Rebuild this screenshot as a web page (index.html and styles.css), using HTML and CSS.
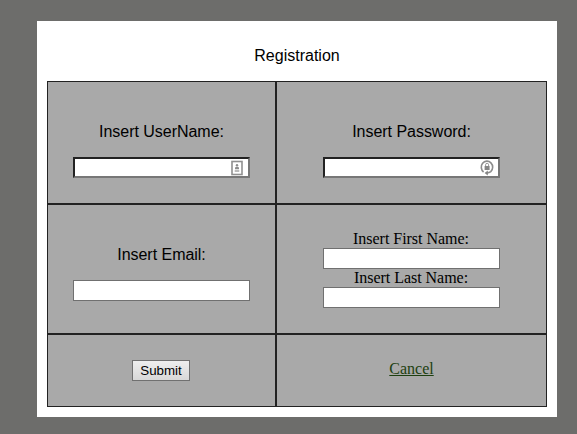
FILE: index.html
```html
<!DOCTYPE html>
<html lang="en">
<head>
<meta charset="utf-8">
<title>Registration</title>
<link rel="stylesheet" href="styles.css">
</head>
<body>
<main class="panel">
  <h1 class="title">Registration</h1>
  <form class="grid">
    <div class="cell user">
      <label class="label" for="user">Insert UserName:</label>
      <div class="field">
        <input class="input inset" id="user" type="text">
        <svg class="icon" width="12" height="16" viewBox="0 0 12 16">
          <rect x="1" y="1.5" width="10" height="13" fill="#fff" stroke="#909090" stroke-width="1.6"/>
          <circle cx="6" cy="5.3" r="1.2" fill="#8c8c8c"/>
          <path d="M4 9.3V8Q4 6.8 6 6.8T8 8V9.3Z" fill="#8c8c8c"/>
          <path d="M3.7 11H8.3" stroke="#aaa" stroke-width="1.6"/>
        </svg>
      </div>
    </div>
    <div class="cell user">
      <label class="label" for="pass">Insert Password:</label>
      <div class="field">
        <input class="input inset" id="pass" type="password">
        <svg class="icon lock" width="14" height="17" viewBox="0 0 14 17">
          <path d="M3.6 13A5.7 6 0 1 1 10.8 12.6Q9.3 13.9 7 13.9" fill="none" stroke="#8c8c8c" stroke-width="1.6"/>
          <path d="M4.6 14L7.8 11.6V16.6Z" fill="#858585"/>
          <rect x="4.6" y="7" width="5" height="4" fill="#858585"/>
          <path d="M5.6 7V5.8A1.5 1.5 0 0 1 8.6 5.8V7" fill="none" stroke="#999"/>
        </svg>
      </div>
    </div>
    <div class="cell email">
      <label class="label" for="email">Insert Email:</label>
      <div class="field"><input class="input" id="email" type="text"></div>
    </div>
    <div class="cell names">
      <label class="name" for="first">Insert First Name:</label>
      <input class="input" id="first" type="text">
      <label class="name" for="last">Insert Last Name:</label>
      <input class="input" id="last" type="text">
    </div>
    <div class="cell actions"><button class="submit" type="button">Submit</button></div>
    <div class="cell actions"><a class="cancel" href="#">Cancel</a></div>
  </form>
</main>
</body>
</html>
```
FILE: styles.css
```css
* { box-sizing: border-box; }
body {
  margin: 0;
  padding: 21px 0 0 37px;
  height: 434px;
  overflow: hidden;
  background: #6d6d6b;
  color: #000;
  font: 16px/18px "Liberation Serif", serif;
}
.panel {
  width: 520px;
  height: 396px;
  padding: 26px 10px 10px;
  background: #fff;
}
.title {
  margin: 0 0 16px;
  text-align: center;
  font: 16px/18px "Liberation Sans", sans-serif;
}
.grid {
  display: grid;
  grid-template-columns: 229px 271px;
  grid-template-rows: 123px 130px 73px;
}
.cell {
  display: flex;
  flex-direction: column;
  align-items: center;
  border: 1px solid #222;
  background: #a9a9a9;
}
.user,
.email { padding-top: 41px; }
.names,
.actions { padding-top: 25px; }
.label {
  margin-bottom: 16px;
  font: 16px/18px "Liberation Sans", sans-serif;
  letter-spacing: -0.03px;
}
.field {
  position: relative;
  height: 21px;
}
.input {
  display: block;
  width: 177px;
  height: 21px;
  margin: 0;
  padding: 1px;
  border: 1px solid #707070;
  border-radius: 0;
  background: #fff;
}
.inset {
  border: 2px solid;
  border-color: #222 #777 #777 #222;
}
.icon {
  position: absolute;
  top: 3px;
  right: 7px;
}
.lock {
  top: 2px;
  right: 6px;
}
.name {
  height: 18px;
  padding-right: 1px;
  letter-spacing: -0.03px;
}
.submit {
  width: 58px;
  height: 21px;
  margin-right: 1px;
  padding: 0;
  border: 1px solid #707070;
  border-radius: 0;
  background: linear-gradient(#eee, #d8d8d8);
  color: #000;
  font: 13.333px/17px "Liberation Sans", sans-serif;
}
.cancel { color: #1d4010; }
```
